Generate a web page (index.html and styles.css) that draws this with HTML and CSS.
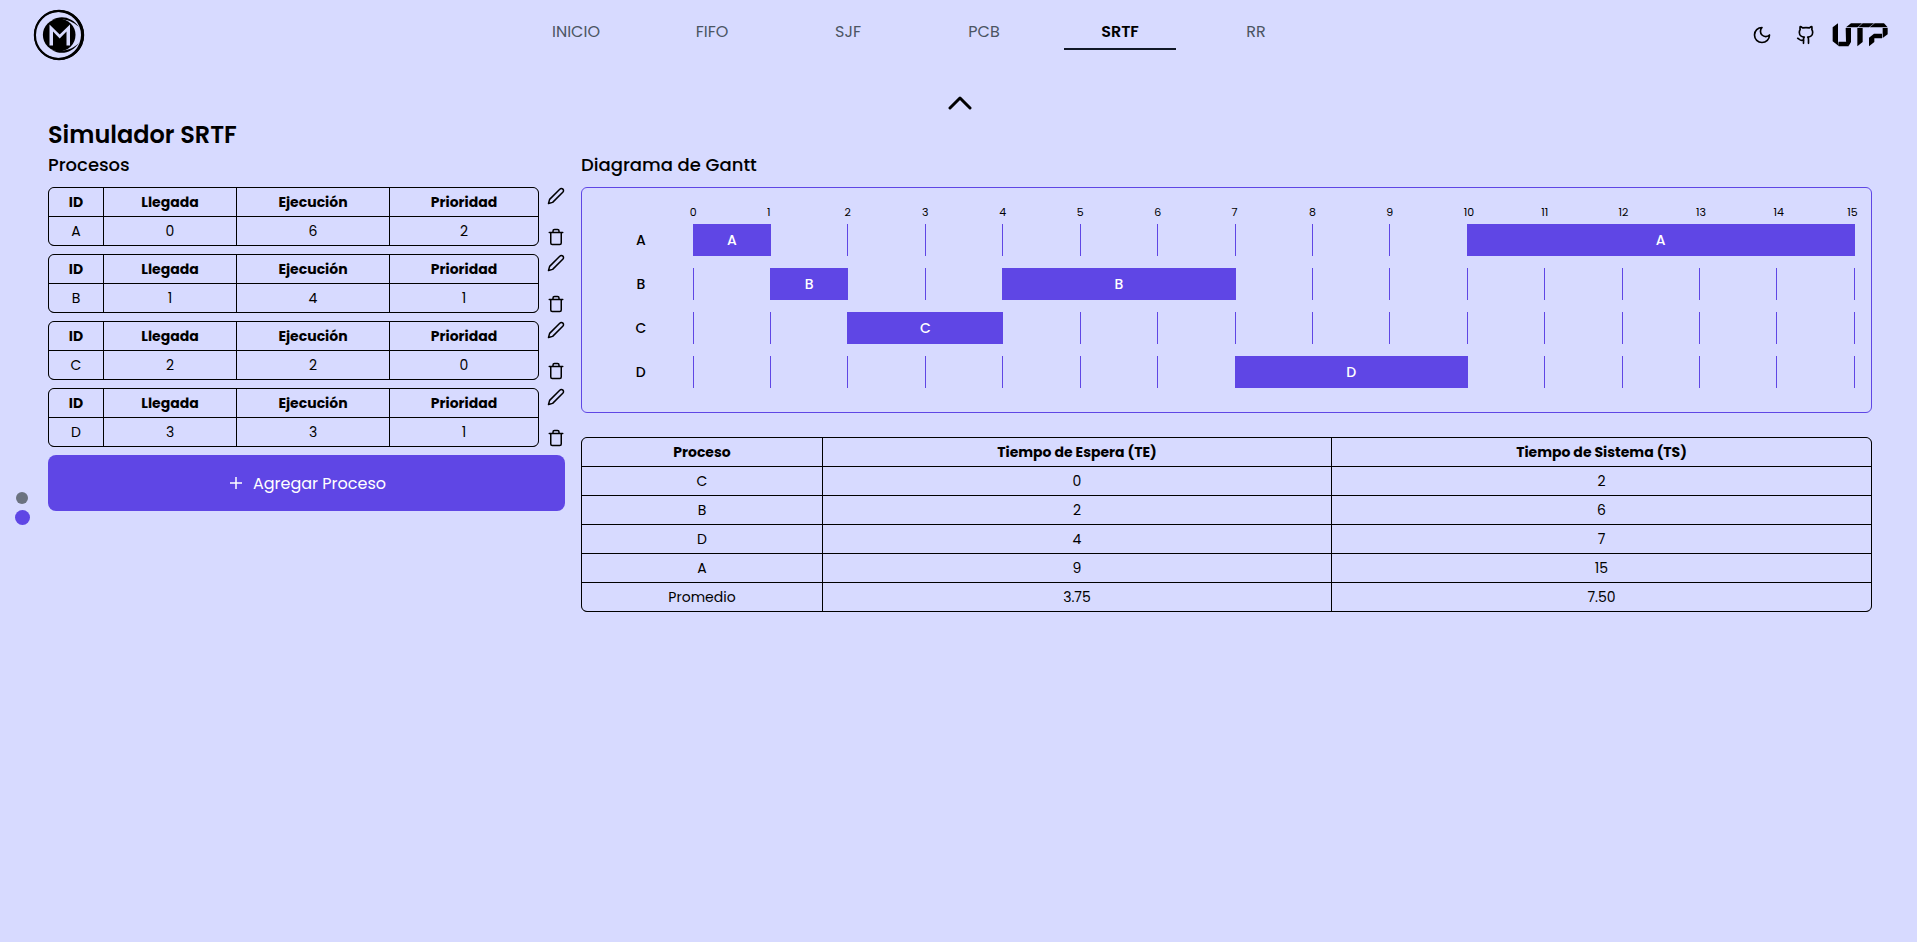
FILE: index.html
```html
<!DOCTYPE html>
<html lang="es">
<head>
<meta charset="utf-8">
<title>Simulador SRTF</title>
<link rel="stylesheet" href="styles.css">
</head>
<body>
<header class="header">
  <svg class="logo" viewBox="0 0 52 52" aria-hidden="true">
    <circle cx="26" cy="26" r="24.100" fill="none" stroke="#000" stroke-width="2.200"/>
    <path fill-rule="evenodd" d="M26 1A25 25 0 1 1 26 51A25 25 0 1 1 26 1ZM25 3A23 23 0 1 0 25 49A23 23 0 1 0 25 3Z"/>
    <path d="M19 11C28 5.500 39 8 46 18C38 10.500 29 9 19 11ZM19 41C28 46.500 39 44 46 34C38 41.500 29 43 19 41Z"/>
    <circle cx="26.200" cy="26" r="16.300"/>
    <path d="M16.500 36.500V15.500L26.700 25.500L37 15.500V36.500H33.500V22.500L26.700 29.500L20 22.500V36.500Z" fill="#d7daff"/>
  </svg>
  <nav class="nav">
    <a>INICIO</a><a>FIFO</a><a>SJF</a><a>PCB</a><a class="active">SRTF</a><a>RR</a>
  </nav>
  <div class="tools">
    <svg class="moon" viewBox="0 0 24 24"><path d="M12 3a6 6 0 0 0 9 9 9 9 0 1 1-9-9Z"/></svg>
    <svg class="cat" viewBox="0 0 24 24"><path d="M15 22v-4a4.800 4.800 0 0 0-1-3.500c3 0 6-2 6-5.500.08-1.250-.27-2.480-1-3.500.28-1.150.28-2.350 0-3.500 0 0-1 0-3 1.500-2.640-.5-5.360-.5-8 0C6 2 5 2 5 2c-.3 1.150-.3 2.350 0 3.500A5.400 5.400 0 0 0 4 9c0 3.500 3 5.500 6 5.500-.39.490-.68 1.050-.85 1.650S8.930 17.380 9 18v4"/><path d="M9 18c-4.510 2-5-2-7-2"/></svg>
    <svg class="utp" viewBox="0 0 168 72"><path d="M2 13L18 1V55L20 69L2 55ZM20 56H43L50 70H20ZM41 15H57V57L50 69L42 55ZM42 13L57 1H90L77 13ZM79 13L92 1H126L111 13ZM76 15H92V57L76 70ZM113 13L128 1H156L167 13ZM152 15H167V34L152 45ZM111 44L126 32H150V46H127V57L111 70Z"/></svg>
  </div>
</header>
<div class="up"><svg viewBox="0 0 24 14"><path d="M2 12L12 2L22 12"/></svg></div>
<div class="pager"><i></i><b></b></div>
<main class="main">
  <h1>Simulador SRTF</h1>
  <div class="columns">
    <section class="left">
      <h2>Procesos</h2>
      <div id="processes" class="processes"></div>
      <button class="add"><svg viewBox="0 0 14 14"><path d="M7 1V13M1 7H13"/></svg><span>Agregar Proceso</span></button>
    </section>
    <section class="right">
      <h2>Diagrama de Gantt</h2>
      <div class="gantt"><div id="scale" class="scale"></div><div id="rows" class="rows"></div></div>
      <div id="results" class="table results"></div>
    </section>
  </div>
</main>
<script src="app.js"></script>
</body>
</html>
```

FILE: styles.css
```css
* { box-sizing: border-box; }
body { margin: 0; min-height: 942px; background: #d7daff; color: #000; font-family: Poppins, Inter, sans-serif; font-size: 14px; }
.header { display: grid; grid-template-columns: 520px 792px 1fr; height: 70px; }
.logo { width: 52px; height: 52px; margin: 9px 0 0 33px; }
.nav { display: flex; gap: 24px; height: 50px; padding-top: 14px; }
.nav a { width: 112px; height: 36px; padding-top: 6px; text-align: center; font-size: 16px; line-height: 24px; color: #4b5563; }
.nav .active { color: #000; font-weight: 600; border-bottom: 2px solid #111827; }
.tools { display: flex; align-items: flex-start; padding-left: 440px; }
.tools svg { fill: none; stroke: #000; stroke-width: 2; stroke-linecap: round; stroke-linejoin: round; flex: none; }
.tools .moon { width: 20px; height: 20px; margin-top: 25px; }
.tools .cat { width: 20px; height: 20px; margin: 25px 0 0 24px; }
.tools .utp { width: 56px; height: 24px; margin: 23px 0 0 16px; fill: #000; stroke: none; }
.up { display: flex; justify-content: center; padding: 26px 0 0 2px; height: 49px; }
.up svg { width: 24px; height: 14px; fill: none; stroke: #000; stroke-width: 3; stroke-linecap: round; stroke-linejoin: round; }
.pager { position: absolute; left: 14px; top: 492px; width: 16px; display: flex; flex-direction: column; align-items: center; gap: 6px; }
.pager i { width: 12px; height: 12px; border-radius: 50%; background: #6b7280; }
.pager b { width: 15px; height: 15px; border-radius: 50%; background: #5f46e5; }
.main { padding: 0 45px 0 48px; }
h1 { margin: 0; font-size: 24px; line-height: 32px; font-weight: 600; height: 32px; }
h2 { margin: 0; font-size: 18px; line-height: 28px; font-weight: 500; height: 36px; }
.columns { display: grid; grid-template-columns: 517px 1291px; gap: 16px; }
.processes { display: flex; flex-direction: column; gap: 8px; }
.process { display: flex; gap: 8px; height: 59px; }
.table { display: grid; gap: 1px; background: #000; border: 1px solid #000; border-radius: 6px; overflow: hidden; }
.table span { background: #d7daff; display: flex; align-items: center; justify-content: center; height: 28px; }
.table .th { font-weight: 700; }
.process .table { width: 491px; grid-template-columns: 54px 132px 152px 148px; }
.icons { display: flex; flex-direction: column; justify-content: space-between; width: 18px; }
.icons svg { width: 18px; height: 18px; fill: none; stroke: #000; stroke-width: 2; stroke-linecap: round; stroke-linejoin: round; }
.add { display: flex; align-items: center; justify-content: center; gap: 10px; width: 517px; height: 56px; margin-top: 8px; padding: 0 0 0 2px; border: 0; border-radius: 8px; background: #5f46e5; color: #fff; font: 400 16px Poppins, Inter, sans-serif; }
.add svg { width: 14px; height: 14px; stroke: #fff; stroke-width: 1.5; }
.gantt { height: 226px; border: 1px solid #5f46e5; border-radius: 6px; padding-top: 16px; }
.scale { display: flex; height: 20px; padding: 0 14px 0 107.7px; font-size: 11px; line-height: 17px; }
.scale span { width: 77.41px; flex: none; }
.scale span:last-child { width: 11px; margin-left: -3.5px; }
.rows { display: flex; flex-direction: column; gap: 12px; }
.row { display: grid; grid-template-columns: 110.675px 1162.2px; height: 32px; align-items: center; }
.row > span { padding-left: 7px; text-align: center; font-weight: 500; }
.track { display: grid; grid-template-columns: repeat(15, 77.41px) 1px; height: 32px; }
.tick { grid-row: 1; width: 1px; background: #5f46e5; }
.bar { grid-row: 1; display: flex; align-items: center; justify-content: center; margin-right: -1px; background: #5f46e5; color: #fff; font-weight: 500; }
.results { margin-top: 24px; grid-template-columns: 240px 508px 539px; }
```

FILE: app.js
```js
const processes = [['A', 0, 6, 2], ['B', 1, 4, 1], ['C', 2, 2, 0], ['D', 3, 3, 1]];
const cells = (list, cls = '') => list.map(v => `<span class="${cls}">${v}</span>`).join('');
const pencil = '<svg viewBox="0 0 24 24"><path d="M17 3a2.850 2.830 0 1 1 4 4L7.500 20.500 2 22l1.500-5.500Z"/></svg>';
const trash = '<svg viewBox="0 0 24 24"><path d="M3 6h18M19 6v14a2 2 0 0 1-2 2H7a2 2 0 0 1-2-2V6M8 6V4a2 2 0 0 1 2-2h4a2 2 0 0 1 2 2v2"/></svg>';
document.getElementById('processes').innerHTML = processes.map(p =>
  `<div class="process"><div class="table">${cells(['ID', 'Llegada', 'Ejecución', 'Prioridad'], 'th')}${cells(p)}</div><div class="icons">${pencil}${trash}</div></div>`).join('');
const times = Array.from({ length: 16 }, (_, i) => i);
document.getElementById('scale').innerHTML = cells(times);
const bars = { A: [[0, 1], [10, 15]], B: [[1, 2], [4, 7]], C: [[2, 4]], D: [[7, 10]] };
document.getElementById('rows').innerHTML = Object.entries(bars).map(([id, list]) =>
  `<div class="row"><span>${id}</span><div class="track">${times.map(t => `<div class="tick" style="grid-column:${t + 1}"></div>`).join('')}${list.map(([a, b]) => `<div class="bar" style="grid-column:${a + 1}/${b + 1}">${id}</div>`).join('')}</div></div>`).join('');
document.getElementById('results').innerHTML = cells(['Proceso', 'Tiempo de Espera (TE)', 'Tiempo de Sistema (TS)'], 'th') +
  cells(['C', 0, 2, 'B', 2, 6, 'D', 4, 7, 'A', 9, 15, 'Promedio', '3.75', '7.50']);
```
